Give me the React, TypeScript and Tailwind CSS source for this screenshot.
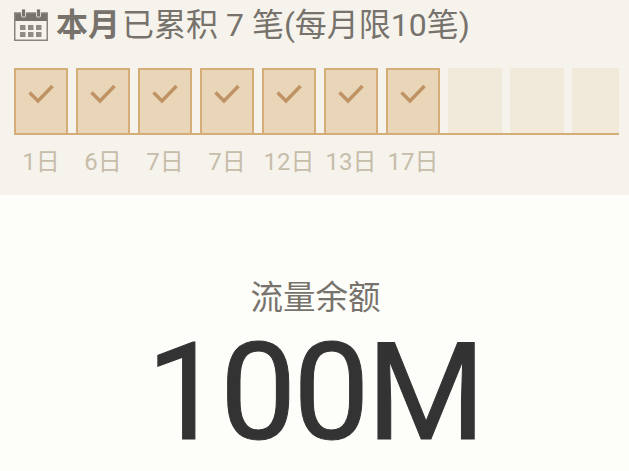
const days = ["1日", "6日", "7日", "7日", "12日", "13日", "17日"];
const cjk = { fontFamily: 'Roboto, "Noto Sans CJK SC", sans-serif' };

function CalendarIcon() {
  return (
    <svg width="34" height="32" viewBox="0 0 34 32" className="block">
      <rect x="0" y="4" width="34" height="8" fill="#77736c" />
      <rect x="0.75" y="4" width="32.5" height="27.25" fill="none" stroke="#8a867f" strokeWidth="1.5" />
      <rect x="7.5" y="0" width="4" height="8" rx="1" fill="#77736c" stroke="#f6f3ec" strokeWidth="0.8" />
      <rect x="22.5" y="0" width="4" height="8" rx="1" fill="#77736c" stroke="#f6f3ec" strokeWidth="0.8" />
      {[6, 14, 22].map((x) =>
        [16, 23].map((y) => <rect key={`${x}-${y}`} x={x} y={y} width="5.5" height="5" fill="#8f8c85" />)
      )}
    </svg>
  );
}

function Check() {
  return (
    <svg width="28" height="22" viewBox="0 0 28 22" className="mt-[13px]">
      <path d="M2.5 9.5 L11 18 L25.5 3" fill="none" stroke="#c09365" strokeWidth="3.5" />
    </svg>
  );
}

export default function App() {
  return (
    <div className="h-[471px] w-[629px] overflow-hidden bg-[#fdfdf9]" style={cjk}>
      <div className="h-[195px] bg-[#f6f3ec] pl-[14px]">
        <div className="flex h-[68px] items-start pt-[9px]">
          <CalendarIcon />
          <div className="ml-[8px] flex h-[32px] items-center whitespace-nowrap text-[32px] leading-[32px] text-[#77736c]">
            <span className="font-bold">本月</span>
            <span className="ml-[2px]">已累积 7 笔(每月限10笔)</span>
          </div>
        </div>
        <div className="flex w-[605px] gap-[8px] overflow-hidden border-b-2 border-[#d4ad78]">
          {Array.from({ length: 10 }).map((_, i) =>
            i < days.length ? (
              <div key={i} className="flex h-[65px] w-[54px] shrink-0 justify-center border-2 border-b-0 border-[#d4ad78] bg-[#e9d6b9]">
                <Check />
              </div>
            ) : (
              <div key={i} className="h-[65px] w-[54px] shrink-0 bg-[#f1eadb]" />
            )
          )}
        </div>
        <div className="mt-[14px] flex gap-[8px]">
          {days.map((d, i) => (
            <div key={i} className="w-[54px] whitespace-nowrap text-center text-[24px] leading-[26px] text-[#c6bdaa]">
              {d}
            </div>
          ))}
        </div>
      </div>
      <div className="flex flex-col items-center">
        <div className="ml-[2px] mt-[84px] text-[32.5px] leading-[38px] text-[#77736c]">流量余额</div>
        <div className="mt-[26px] text-[136px] leading-[100px] tracking-[-3px] text-[#333333] [-webkit-text-stroke:1px_#333333]">100M</div>
      </div>
    </div>
  );
}
